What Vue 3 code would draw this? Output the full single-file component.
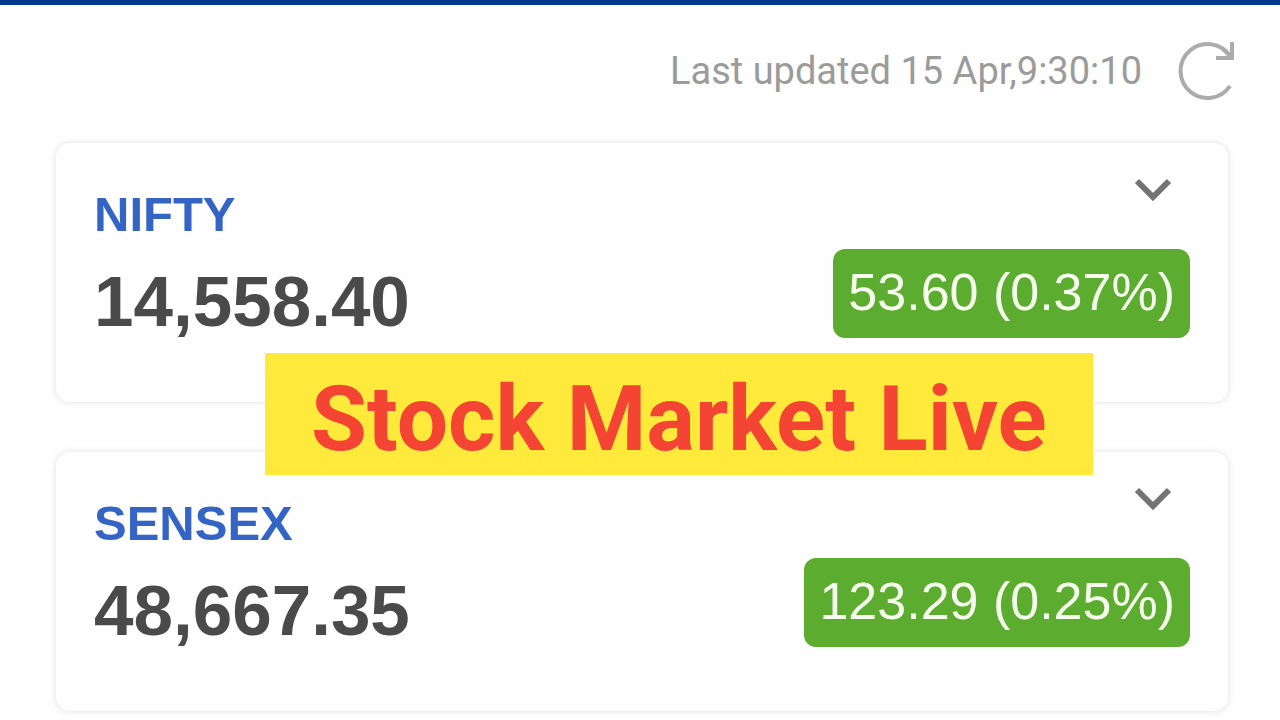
<script setup>
const updatedAt = '15 Apr,9:30:10'
const indices = [
  { name: 'NIFTY', value: '14,558.40', change: '53.60 (0.37%)' },
  { name: 'SENSEX', value: '48,667.35', change: '123.29 (0.25%)' },
]
</script>

<template>
  <div class="page">
    <header class="status">
      <span class="updated">Last updated {{ updatedAt }}</span>
      <button class="icon-button" type="button" aria-label="Refresh">
        <svg class="refresh" viewBox="0 0 60 64" width="60" height="64" fill="none" stroke="#ababab" stroke-width="4">
          <path d="M52 47 A27 27 0 1 1 52 17" />
          <path d="M54 3 V19 H38" />
          <path d="M44 9 L54 19" />
        </svg>
      </button>
    </header>
    <main class="board">
      <section v-for="item in indices" :key="item.name" class="card">
        <div class="quote">
          <h2 class="name">{{ item.name }}</h2>
          <p class="value">{{ item.value }}</p>
        </div>
        <div class="side">
          <button class="icon-button" type="button" :aria-label="`Show ${item.name} details`">
            <svg class="chevron" viewBox="0 0 38 26" width="38" height="26" fill="none" stroke="#747474" stroke-width="6">
              <path d="M3 4 L19 20 L35 4" />
            </svg>
          </button>
          <span class="change">{{ item.change }}</span>
        </div>
      </section>
      <h1 class="banner">Stock Market Live</h1>
    </main>
  </div>
</template>

<style>
body {
  background: #fefefe;
}
</style>

<style scoped>
.page {
  border-top: 5px solid #003a8c;
  font-family: "Liberation Sans", Arial, sans-serif;
}

.status {
  display: flex;
  align-items: center;
  justify-content: flex-end;
  gap: 36px;
  height: 132px;
  padding: 0 42px 0 56px;
  box-sizing: border-box;
}

.updated {
  color: #9b9b9b;
  font: 400 38px/48px Roboto, sans-serif;
}

.icon-button {
  padding: 0;
  border: 0;
  background: none;
  cursor: pointer;
}

.icon-button svg {
  display: block;
}

.board {
  position: relative;
  display: flex;
  flex-direction: column;
  gap: 50px;
  padding: 6px 52px 10px 56px;
}

.card {
  display: flex;
  justify-content: space-between;
  padding: 34px 38px 57px;
  border-radius: 14px;
  background: #fefefe;
  box-shadow: 0 0 4px 2px #ededed;
}

.name,
.value,
.banner {
  margin: 0;
  font-weight: 700;
  white-space: nowrap;
}

.name {
  color: #3565c4;
  font-size: 49px;
  line-height: 74px;
}

.value {
  padding-top: 8px;
  color: #4a4a4a;
  font-size: 71px;
  line-height: 86px;
}

.side {
  display: flex;
  flex-direction: column;
  align-items: flex-end;
  gap: 46px;
}

.side .icon-button {
  margin-right: 18px;
}

.change {
  padding: 14px 15px 17px;
  border-radius: 12px;
  background: #5cac30;
  color: #f6ffee;
  font-size: 52px;
  line-height: 58px;
  white-space: nowrap;
}

.banner {
  position: absolute;
  top: 216px;
  left: 265px;
  padding: 12px 46px 2px;
  background: #ffea3b;
  color: #f44434;
  font-family: Roboto, sans-serif;
  font-size: 91px;
  line-height: 108px;
}
</style>
